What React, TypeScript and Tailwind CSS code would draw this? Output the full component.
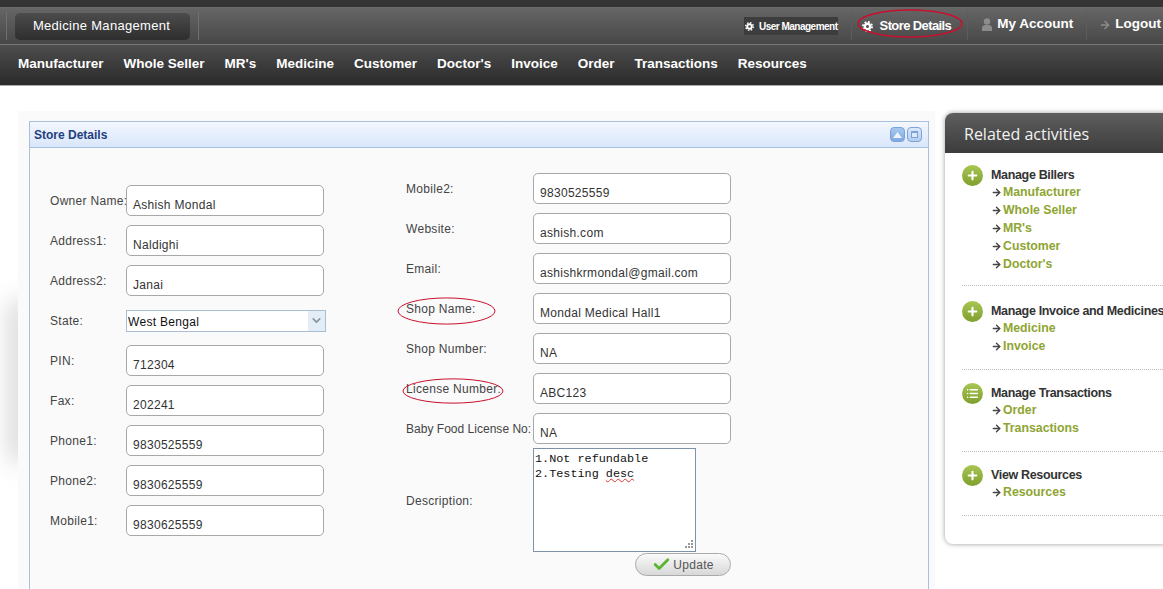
import { Check, ChevronDown, ArrowRight, Plus, List } from 'lucide-react'

const sans = 'font-["Liberation_Sans",Arial,sans-serif]'

const NAV = ['Manufacturer', 'Whole Seller', "MR's", 'Medicine', 'Customer', "Doctor's", 'Invoice', 'Order', 'Transactions', 'Resources']

const LEFT: [string, string][] = [
  ['Owner Name:', 'Ashish Mondal'],
  ['Address1:', 'Naldighi'],
  ['Address2:', 'Janai'],
  ['State:', 'West Bengal'],
  ['PIN:', '712304'],
  ['Fax:', '202241'],
  ['Phone1:', '9830525559'],
  ['Phone2:', '9830625559'],
  ['Mobile1:', '9830625559'],
]

const RIGHT: [string, string][] = [
  ['Mobile2:', '9830525559'],
  ['Website:', 'ashish.com'],
  ['Email:', 'ashishkrmondal@gmail.com'],
  ['Shop Name:', 'Mondal Medical Hall1'],
  ['Shop Number:', 'NA'],
  ['License Number:', 'ABC123'],
  ['Baby Food License No:', 'NA'],
]

const ACTIVITIES = [
  { title: 'Manage Billers', icon: 'plus', links: ['Manufacturer', 'Whole Seller', "MR's", 'Customer', "Doctor's"] },
  { title: 'Manage Invoice and Medicines', icon: 'plus', links: ['Medicine', 'Invoice'] },
  { title: 'Manage Transactions', icon: 'list', links: ['Order', 'Transactions'] },
  { title: 'View Resources', icon: 'plus', links: ['Resources'] },
]

function Ellipse({ className, width = 1 }: { className: string; width?: number }) {
  return (
    <svg className={`absolute pointer-events-none ${className}`} viewBox="0 0 100 30" preserveAspectRatio="none">
      <ellipse cx="50" cy="15" rx="49" ry="14" fill="none" stroke="#c8102e" strokeWidth={width} vectorEffect="non-scaling-stroke" />
    </svg>
  )
}

function Gear({ size }: { size: number }) {
  return (
    <svg width={size} height={size} viewBox="0 0 12 12" fill="none" stroke="#fff" className="shrink-0">
      <circle cx="6" cy="6" r="3" strokeWidth="2.6" />
      <circle cx="6" cy="6" r="5" strokeWidth="2" strokeDasharray="2 1.93" />
    </svg>
  )
}

function Row({ label, value, labelW }: { label: string; value: string; labelW: string }) {
  const spacing = label === 'Baby Food License No:' ? 'tracking-[0.02px]' : 'tracking-[0.3px]'
  return (
    <div className="flex items-center h-[31px] mb-[9px]">
      <span className={`${labelW} ${spacing} shrink-0 whitespace-nowrap text-[12px] text-[#444]`}>{label}</span>
      {label === 'State:' ? (
        <div className="w-[200px] h-[22px] flex items-center border border-[#a9bdd3] bg-white">
          <span className="flex-1 pl-[1px] pt-[2px] text-[12px] tracking-[0.3px] text-[#111]">{value}</span>
          <span className="w-[17px] h-full flex items-center justify-center bg-[#e3edf7]">
            <ChevronDown size={13} strokeWidth={3} className="text-[#8a94a0]" />
          </span>
        </div>
      ) : (
        <div className="w-[198px] h-[31px] border border-[#a8a8a8] rounded-[5px] bg-white flex items-end pl-[6px] pb-[3px] text-[12px] tracking-[0.3px] text-[#333] leading-[14px]">
          {value}
        </div>
      )}
    </div>
  )
}

function Activity({ title, icon, links }: { title: string; icon: string; links: string[] }) {
  return (
    <div className="flex border-b border-dotted border-[#bbb] pb-[14px] mb-[15px] first:pb-[12px] first:mb-[17px] whitespace-nowrap">
      <span className="w-[21px] h-[21px] shrink-0 rounded-full bg-gradient-to-b from-[#a9c652] to-[#7f9f2e] flex items-center justify-center mr-[8px] -mt-[2px]">
        {icon === 'plus' ? (
          <Plus size={13} strokeWidth={4} className="text-white" />
        ) : (
          <List size={13} strokeWidth={3} className="text-white" />
        )}
      </span>
      <div>
        <div className="text-[12.5px] leading-[16px] font-bold text-[#333] tracking-[-0.34px]">{title}</div>
        {links.map(l => (
          <div key={l} className="flex items-center h-[18px] text-[12.3px] font-bold text-[#8ea532]">
            <ArrowRight size={11} strokeWidth={3} className="text-[#444] mr-[1px]" />
            {l}
          </div>
        ))}
      </div>
    </div>
  )
}

export default function App() {
  return (
    <div className={`${sans} w-[1163px] h-[589px] overflow-hidden bg-white`}>
      <div className="h-[8px] bg-[#343434] border-b border-[#6a6a6a]" />

      {/* Top bar */}
      <div className="h-[37px] flex items-center bg-gradient-to-b from-[#666] to-[#474747] border-b border-[#777]">
        <div className="ml-[6px] h-[28px] border-l border-[#6f6f6f]" />
        <div className="ml-[8px] w-[175px] h-[27px] rounded-[5px] bg-gradient-to-b from-[#4c4c4c] to-[#2e2e2e] flex items-center justify-center pr-[2px] text-[13px] tracking-[0.3px] text-white">
          Medicine Management
        </div>
        <div className="ml-[8px] h-[28px] border-l border-[#6f6f6f]" />
        <div className="ml-auto pr-[2px] flex items-center text-white whitespace-nowrap">
          <span className="flex items-center bg-[#3d3d3d] h-[18px] pl-[1px] text-[10px] font-bold tracking-[-0.5px]">
            <Gear size={9} />
            <span className="ml-[5px]">User Management</span>
          </span>
          <div className="ml-[13px] h-[28px] border-l border-[#5c5c5c]" />
          <span className="relative ml-[10px] flex items-center text-[13px] font-bold tracking-[-0.6px]">
            <Gear size={11} />
            <span className="ml-[7px]">Store Details</span>
            <Ellipse width={1.5} className="-left-[5px] -top-[7px] w-[106px] h-[29px]" />
          </span>
          <div className="ml-[16px] h-[28px] border-l border-[#5c5c5c]" />
          <span className="flex items-center ml-[13px] -mt-[3px] text-[13.5px] font-bold">
            <svg width="12" height="13" viewBox="0 0 12 13" fill="#8c8c8c" className="mr-[4px]">
              <circle cx="6" cy="3.5" r="3.2" />
              <path d="M1 13v-3q0-2.5 3-3h4q3 .5 3 3v3z" />
            </svg>
            My Account
          </span>
          <div className="ml-[13px] h-[28px] border-l border-[#5c5c5c]" />
          <span className="flex items-center ml-[12px] -mt-[3px] text-[13.5px] font-bold">
            <ArrowRight size={12} strokeWidth={3} className="mr-[4px] text-[#8c8c8c]" />
            Logout
          </span>
        </div>
      </div>

      {/* Menu bar */}
      <div className="h-[41px] pl-[18px] pb-[2px] flex items-center gap-[20px] bg-gradient-to-b from-[#4d4d4d] to-[#2b2b2b] border-b border-[#aaa] text-[13.5px] font-bold text-white whitespace-nowrap">
        {NAV.map(n => (
          <span key={n}>{n}</span>
        ))}
      </div>

      <div className="flex pt-[25px] pl-[18px]">
        {/* Form panel */}
        <div className="relative w-[917px] shrink-0 h-[500px] bg-[#fafafa] pl-[11px] pt-[10px] pr-[6px]">
          {/* soft shadow bleeding out on the left edge */}
          <div className="absolute -left-[18px] top-[100px] w-[18px] h-[340px] overflow-hidden">
            <div className="absolute left-[15px] top-[90px] w-[8px] h-[160px] bg-[#999] blur-[12px]" />
          </div>

          <div className="border border-[#a9bfdc] h-full">
            <div className="h-[26px] flex items-center justify-between pl-[4px] pr-[6px] border-b border-[#a9bfdc] bg-gradient-to-b from-[#f3f7fe] to-[#d9e6fa]">
              <span className="text-[12px] font-bold text-[#1f3f7f]">Store Details</span>
              <span className="flex gap-[2px]">
                <span className="w-[15px] h-[15px] rounded-[4px] bg-gradient-to-b from-[#a9c8f0] to-[#7ea9e0] border border-[#7aa3d8] flex items-center justify-center">
                  <svg width="9" height="6" viewBox="0 0 9 6" fill="#eef4fc">
                    <path d="M4.5 0L9 6H0z" />
                  </svg>
                </span>
                <span className="w-[15px] h-[15px] rounded-[4px] bg-gradient-to-b from-[#dbe8f8] to-[#b4cdee] border border-[#7aa3d8] flex items-center justify-center">
                  <span className="w-[7px] h-[7px] border border-[#7aa3d8] border-t-2 bg-[#dbe8f8]" />
                </span>
              </span>
            </div>

            <div className="flex pl-[20px]">
              <div className="pt-[37px] w-[356px] shrink-0">
                {LEFT.map(([l, v]) => (
                  <Row key={l} label={l} value={v} labelW="w-[76px]" />
                ))}
              </div>

              <div className="relative pt-[25px]">
                {RIGHT.map(([l, v]) => (
                  <Row key={l} label={l} value={v} labelW="w-[127px]" />
                ))}
                <Ellipse className="-left-[9px] top-[149px] w-[99px] h-[28px]" />
                <Ellipse className="-left-[4px] top-[230px] w-[102px] h-[26px]" />

                <div className="flex items-center -mt-[5px]">
                  <span className="w-[127px] shrink-0 text-[12px] tracking-[0.3px] text-[#444] mt-[1px]">Description:</span>
                  <div className="relative w-[163px] h-[104px] border border-[#7f93a8] bg-white pl-[1px] pr-[2px] pt-[3px] font-['Liberation_Mono',monospace] text-[11.8px] leading-[15px] text-[#111]">
                    <div>1.Not refundable</div>
                    <div>
                      2.Testing <span className="underline decoration-wavy decoration-[#d33] decoration-1">desc</span>
                    </div>
                    <svg className="absolute right-[1px] bottom-[1px]" width="11" height="11" viewBox="0 0 11 11" fill="#999">
                      <rect x="8" y="1" width="2" height="2" />
                      <rect x="5" y="4" width="2" height="2" />
                      <rect x="8" y="4" width="2" height="2" />
                      <rect x="2" y="7" width="2" height="2" />
                      <rect x="5" y="7" width="2" height="2" />
                      <rect x="8" y="7" width="2" height="2" />
                    </svg>
                  </div>
                </div>

                <div className="flex justify-end w-[325px] mt-[1px]">
                  <div className="w-[96px] h-[23px] rounded-full border border-[#aaa] bg-gradient-to-b from-[#fafafa] to-[#d8d8d8] flex items-center justify-center text-[12px] tracking-[0.3px] text-[#555]">
                    <Check size={19} strokeWidth={3.5} className="text-[#5cb531] mr-[2px]" />
                    Update
                  </div>
                </div>
              </div>
            </div>
          </div>
        </div>

        {/* Sidebar */}
        <div className="ml-[10px] mt-[2px] w-[240px] shrink-0 h-[431px] self-start rounded-[8px] bg-white shadow-[0_0_5px_rgba(0,0,0,0.4)] overflow-hidden">
          <div className="h-[40px] pl-[19px] pt-[1px] flex items-center bg-gradient-to-b from-[#5e5e5e] to-[#3c3c3c] font-['Open_Sans',sans-serif] text-[16px] text-[#f2f2f2]">
            Related activities
          </div>
          <div className="pl-[17px] pr-[20px] pt-[14px]">
            {ACTIVITIES.map(a => (
              <Activity key={a.title} {...a} />
            ))}
          </div>
        </div>
      </div>
    </div>
  )
}
